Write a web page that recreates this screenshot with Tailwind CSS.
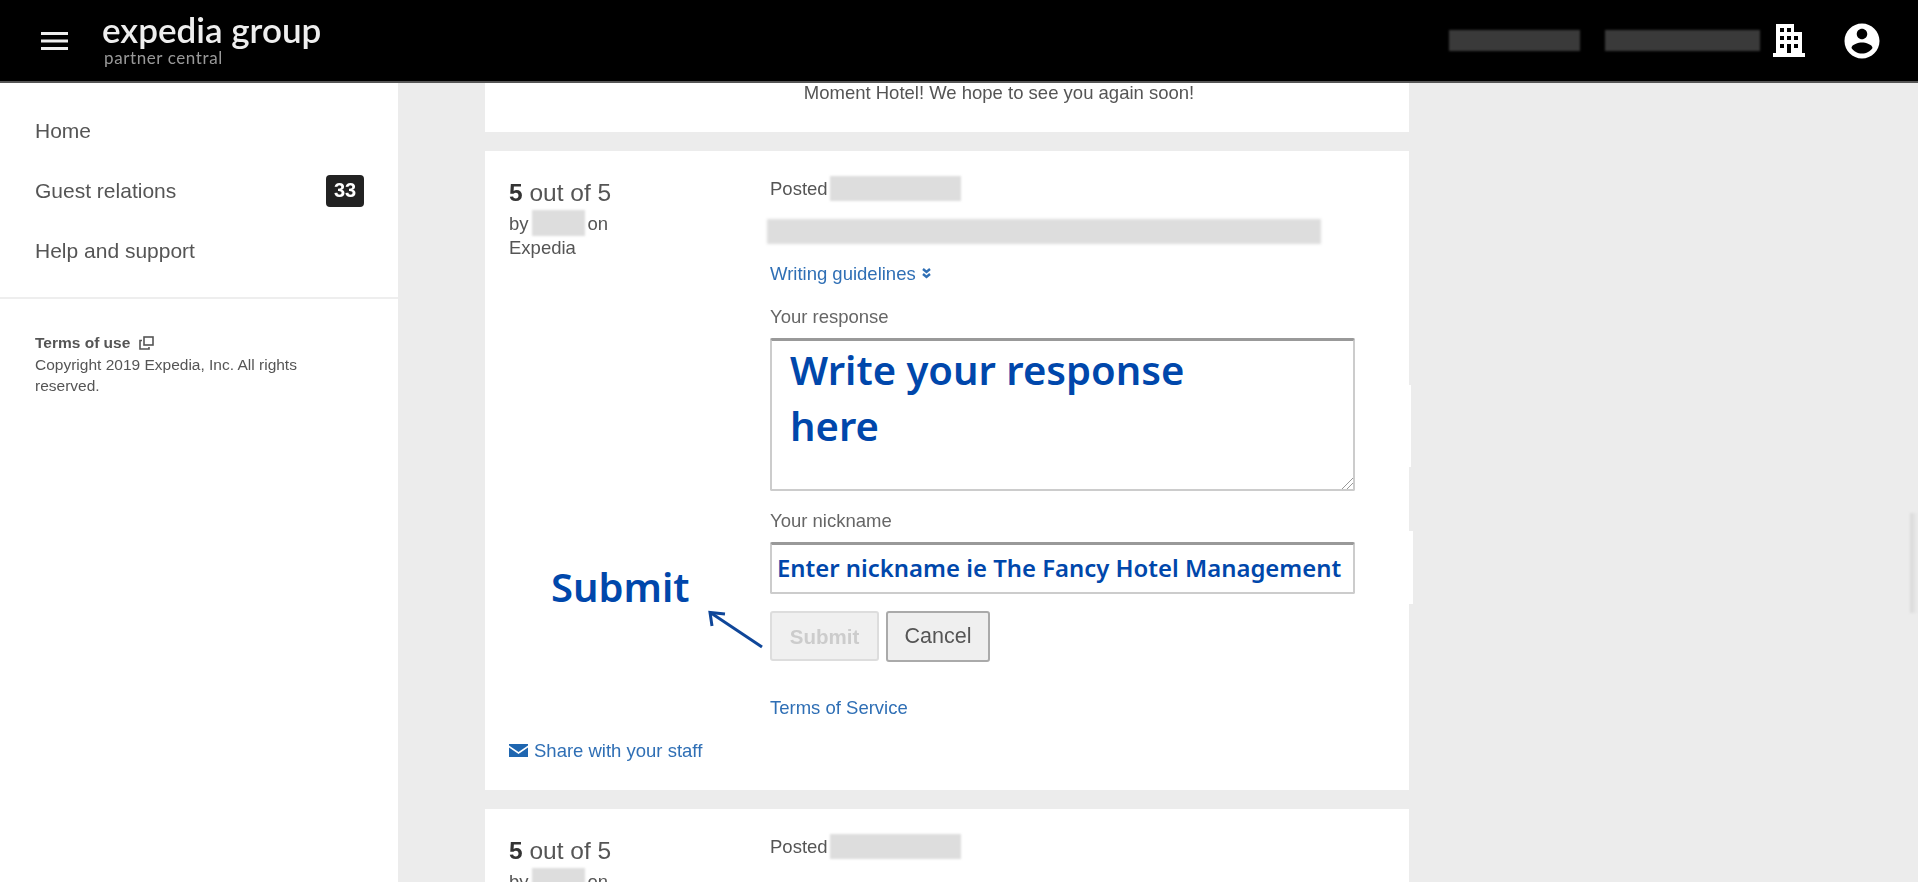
<!DOCTYPE html>
<html lang="en">
  <head>
    <meta charset="UTF-8" />
    <meta name="viewport" content="width=device-width, initial-scale=1" />
    <title>Guest relations</title>
    <script src="https://cdn.jsdelivr.net/npm/@tailwindcss/browser@4"></script>
  </head>
  <body class="h-screen overflow-hidden bg-white pr-[2px] font-['Liberation_Sans',sans-serif] text-[#555]">
    <!-- Top bar -->
    <header class="flex h-[83px] items-center border-b-2 border-[#555] bg-black pl-[41px] pr-[35px]">
      <svg class="h-[18px] w-[27px] blur-[0.5px]" viewBox="0 0 27 18" fill="#eee">
        <rect width="27" height="3" y="0" />
        <rect width="27" height="3" y="7.5" />
        <rect width="27" height="3" y="15" />
      </svg>
      <div class="ml-[34px] -mt-[5px] flex flex-col blur-[0.6px]">
        <span class="font-['Lato',sans-serif] text-[35px] leading-[38px] font-semibold tracking-[0px] text-[#eee]">expedia group</span>
        <span class="ml-[2px] font-['Lato',sans-serif] text-[17px] leading-[19px] tracking-[0.6px] text-[#999]">partner central</span>
      </div>
      <div class="ml-auto h-[21px] w-[131px] bg-[#3a3a3a] blur-[1px]"></div>
      <div class="ml-[25px] h-[21px] w-[155px] bg-[#3a3a3a] blur-[1px]"></div>
      <svg class="ml-[13px] h-[34px] w-[32px] blur-[0.4px]" viewBox="0 0 32 34" fill="#fff">
        <path fill-rule="evenodd" d="M3 0h18v8h8v21h3v4H0v-4h3zM7 4v4h4V4zM14 4v4h4V4zM7 12v4h4v-4zM14 12v4h4v-4zM21 12v4h4v-4zM7 20v4h4v-4zM21 20v4h4v-4zM14 20v9h4v-9z" />
      </svg>
      <svg class="ml-[36px] h-[42px] w-[42px] blur-[0.4px]" viewBox="0 0 24 24" fill="#fff">
        <path d="M12 2C6.48 2 2 6.48 2 12s4.48 10 10 10 10-4.48 10-10S17.52 2 12 2zm0 3c1.66 0 3 1.34 3 3s-1.34 3-3 3-3-1.34-3-3 1.34-3 3-3zm0 14.2c-2.5 0-4.71-1.28-6-3.22.03-1.99 4-3.08 6-3.08 1.99 0 5.97 1.09 6 3.08-1.29 1.94-3.5 3.22-6 3.22z" />
      </svg>
    </header>

    <div class="flex h-[799px]">
      <!-- Sidebar -->
      <aside class="w-[398px] shrink-0 blur-[0.5px]">
        <nav class="flex flex-col gap-[35px] border-b-2 border-[#eee] pt-[35px] pb-[34px] pl-[35px] pr-[34px] text-[21px] leading-[25px]">
          <a>Home</a>
          <a class="flex h-[25px] items-center justify-between">
            Guest relations
            <span class="flex h-[32px] w-[38px] items-center justify-center rounded-[4px] bg-[#222] text-[20px] font-bold text-white">33</span>
          </a>
          <a>Help and support</a>
        </nav>
        <div class="pl-[35px] pr-[60px] pt-[33px] text-[15.5px] leading-[21.5px]">
          <p class="flex items-center gap-[9px] font-bold">
            Terms of use
            <svg class="h-[14px] w-[15px]" viewBox="0 0 15 14" fill="none" stroke="#555" stroke-width="1.6">
              <rect x="5" y="1" width="9" height="8" />
              <path d="M3 4.5H1v8.5h9v-2" />
            </svg>
          </p>
          <p>Copyright 2019 Expedia, Inc. All rights reserved.</p>
        </div>
      </aside>

      <!-- Reviews column -->
      <main class="relative flex-1 overflow-hidden bg-[#ececec] pl-[87px]">
        <section class="flex h-[49px] w-[924px] justify-center bg-white pl-[104px] text-[18.5px] leading-[20px] blur-[0.5px]">
          Moment Hotel! We hope to see you again soon!
        </section>

        <section class="mt-[19px] flex h-[639px] w-[924px] bg-white pt-[25px] pl-[24px] text-[18.5px] leading-[25px]">
          <div class="flex w-[261px] shrink-0 flex-col blur-[0.5px]">
            <p class="text-[24.5px] leading-[34px]"><b class="text-[#333]">5</b> out of 5</p>
            <p class="flex items-center">by<span class="mx-[3px] h-[26px] w-[53px] bg-[#ddd] blur-[1px]"></span>on</p>
            <p class="-mt-[1px]">Expedia</p>
            <a class="mt-auto mb-[27px] flex items-center gap-[6px] text-[#2f6fb5]">
              <svg class="h-[13px] w-[19px]" viewBox="0 0 19 13" fill="#1f66b0">
                <path d="M0 0h19v1.500L9.500 8 0 1.500zM0 3.500 9.500 10 19 3.500V13H0z" />
              </svg>
              Share with your staff
            </a>
          </div>

          <div class="flex w-[585px] flex-col">
            <p class="flex items-center blur-[0.5px]">Posted<span class="ml-[2px] h-[25px] w-[131px] bg-[#ddd] blur-[1px]"></span></p>
            <div class="mt-[18px] -ml-[3px] h-[25px] w-[554px] bg-[#ddd] blur-[1.5px]"></div>
            <a class="mt-[18px] flex h-[25px] items-center gap-[6px] pb-[2px] text-[#2f6fb5] blur-[0.5px]">
              Writing guidelines
              <svg class="h-[11px] w-[9px]" viewBox="0 0 9 11" fill="none" stroke="#2f6fb5" stroke-width="2.400">
                <path d="M1 1l3.500 3L8 1M1 6l3.500 3L8 6" />
              </svg>
            </a>
            <label class="mt-[18px] h-[25px] leading-[23px] text-[#666] blur-[0.5px]">Your response</label>
            <div class="relative mt-[8px] h-[153px] rounded-[2px] border-2 border-t-[3px] border-[#ccc] border-t-[#999] bg-white pl-[18px] font-['Noto_Sans',sans-serif] text-[40px] leading-[56px] font-semibold text-[#0047ab]">
              <p class="pt-px">Write your response<br />here</p>
              <svg class="absolute right-0 bottom-0 h-[12px] w-[12px]" viewBox="0 0 12 12" stroke="#999" stroke-width="1">
                <path d="M1 12 12 1M6 12l6-6" />
              </svg>
            </div>
            <label class="mt-[17px] text-[#666] blur-[0.5px]">Your nickname</label>
            <div class="mt-[9px] flex h-[52px] items-center rounded-[2px] border-2 border-t-[3px] border-[#ccc] border-t-[#999] bg-white pb-[2px] pl-[5px] font-['Noto_Sans',sans-serif] text-[23.9px] font-semibold whitespace-nowrap text-[#0047ab]">
              Enter nickname ie The Fancy Hotel Management
            </div>
            <div class="mt-[17px] flex items-start gap-[7px] blur-[0.5px]">
              <button class="h-[50px] w-[109px] rounded-[3px] border-2 border-[#ddd] bg-[#f0f0f0] text-[20.5px] font-bold text-[#ccc]">Submit</button>
              <button class="h-[51px] w-[104px] rounded-[3px] border-2 border-[#aaa] bg-[#efefef] text-[21.5px] text-[#555]">Cancel</button>
            </div>
            <a class="mt-[33px] text-[#2f6fb5] blur-[0.5px]">Terms of Service</a>
          </div>
        </section>

        <section class="mt-[19px] flex h-[100px] w-[924px] bg-white pt-[25px] pl-[24px] text-[18.5px] leading-[25px] blur-[0.5px]">
          <div class="flex w-[261px] shrink-0 flex-col">
            <p class="text-[24.5px] leading-[34px]"><b class="text-[#333]">5</b> out of 5</p>
            <p class="flex items-center">by<span class="mx-[3px] h-[26px] w-[53px] bg-[#ddd] blur-[1px]"></span>on</p>
          </div>
          <p class="flex h-[25px] items-center">Posted<span class="ml-[2px] h-[25px] w-[131px] bg-[#ddd] blur-[1px]"></span></p>
        </section>

        <!-- Callout drawn over the card -->
        <div class="absolute top-[477px] left-[153px] font-['Noto_Sans',sans-serif] text-[40px] leading-[53px] font-semibold text-[#0047ab]">Submit</div>
        <svg class="absolute top-[524px] left-[306px] h-[44px] w-[64px]" viewBox="0 0 64 44" fill="none" stroke="#0f4699" stroke-width="3">
          <path d="M58 40 7 6" />
          <path d="M8 19 6 5.500 21 7" />
        </svg>

        <!-- Leftovers from the pasted screenshot edits -->
        <div class="absolute top-[302px] left-[1010px] h-[82px] w-[3px] bg-white"></div>
        <div class="absolute top-[448px] left-[1010px] h-[73px] w-[5px] bg-white"></div>
        <div class="absolute top-[430px] right-0 h-[100px] w-[8px] bg-gradient-to-r from-[#d8d8d8] to-[#ececec] blur-[1px]"></div>
      </main>
    </div>
  </body>
</html>
